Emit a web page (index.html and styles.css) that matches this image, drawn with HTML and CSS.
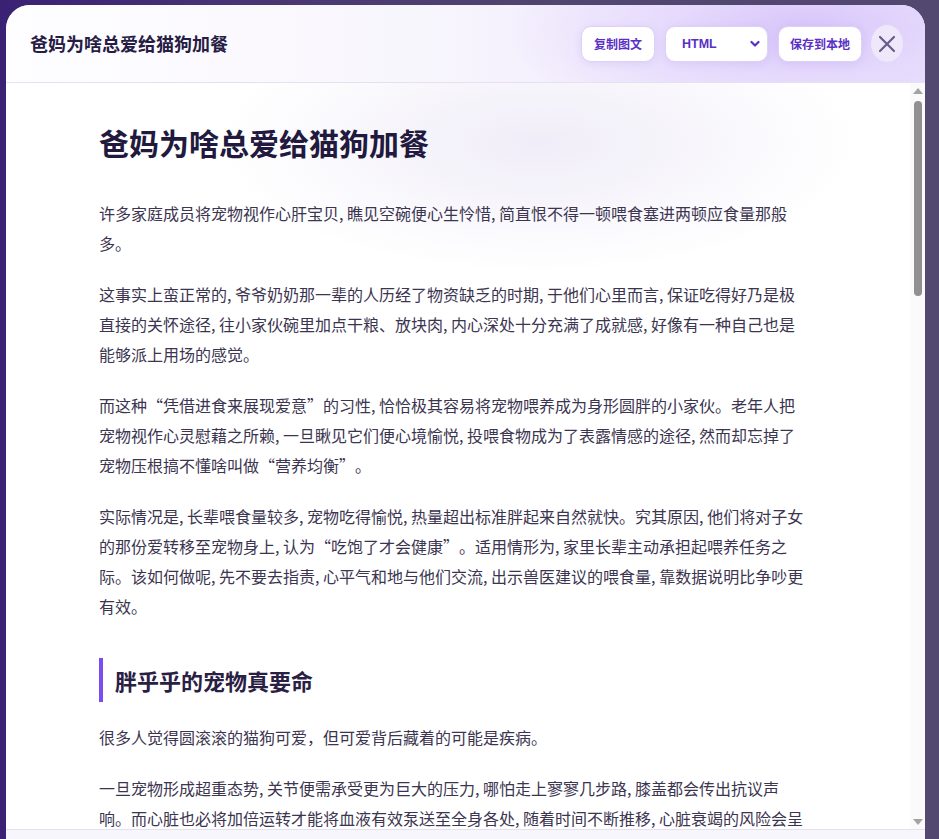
FILE: index.html
```html
<!DOCTYPE html>
<html lang="zh-CN">
<head>
<meta charset="utf-8">
<title>爸妈为啥总爱给猫狗加餐</title>
<link rel="stylesheet" href="styles.css">
</head>
<body>
<div class="modal">
  <header class="modal-header">
    <h2 class="modal-title">爸妈为啥总爱给猫狗加餐</h2>
    <div class="actions">
      <button class="btn">复制图文</button>
      <div class="select">
        <span>HTML</span>
        <svg class="chev" width="10" height="8" viewBox="0 0 10 8"><path d="M1.5 2 L5 5.5 L8.5 2" fill="none" stroke="#5b2fc9" stroke-width="2.2" stroke-linecap="round" stroke-linejoin="round"/></svg>
      </div>
      <button class="btn">保存到本地</button>
      <button class="close" aria-label="关闭">
        <svg width="20" height="20" viewBox="0 0 20 20"><path d="M3 3 L17 17 M17 3 L3 17" fill="none" stroke="#6a5b88" stroke-width="2.2" stroke-linecap="round"/></svg>
      </button>
    </div>
  </header>
  <main class="modal-body">
    <div class="scroll-area">
      <article class="article">
        <h1>爸妈为啥总爱给猫狗加餐</h1>
        <p>许多家庭成员将宠物视作心肝宝贝, 瞧见空碗便心生怜惜, 简直恨不得一顿喂食塞进两顿应食量那般多。</p>
        <p>这事实上蛮正常的, 爷爷奶奶那一辈的人历经了物资缺乏的时期, 于他们心里而言, 保证吃得好乃是极直接的关怀途径, 往小家伙碗里加点干粮、放块肉, 内心深处十分充满了成就感, 好像有一种自己也是能够派上用场的感觉。</p>
        <p>而这种“凭借进食来展现爱意”的习性, 恰恰极其容易将宠物喂养成为身形圆胖的小家伙。老年人把宠物视作心灵慰藉之所赖, 一旦瞅见它们便心境愉悦, 投喂食物成为了表露情感的途径, 然而却忘掉了宠物压根搞不懂啥叫做“营养均衡”。</p>
        <p>实际情况是, 长辈喂食量较多, 宠物吃得愉悦, 热量超出标准胖起来自然就快。究其原因, 他们将对子女的那份爱转移至宠物身上, 认为“吃饱了才会健康”。适用情形为, 家里长辈主动承担起喂养任务之际。该如何做呢, 先不要去指责, 心平气和地与他们交流, 出示兽医建议的喂食量, 靠数据说明比争吵更有效。</p>
        <h2>胖乎乎的宠物真要命</h2>
        <p>很多人觉得圆滚滚的猫狗可爱，但可爱背后藏着的可能是疾病。</p>
        <p>一旦宠物形成超重态势, 关节便需承受更为巨大的压力, 哪怕走上寥寥几步路, 膝盖都会传出抗议声响。而心脏也必将加倍运转才能将血液有效泵送至全身各处, 随着时间不断推移, 心脏衰竭的风险会呈现出逐步上升的态势。除此之外, 糖尿病、脂肪肝、呼吸困难等问题也会接踵而至, 让原本活泼的小家伙变得懒洋洋、不愿动弹。</p>
        <p>更让人揪心的是, 肥胖带来的伤害往往是悄无声息的。等到宠物出现明显的症状时, 身体里的器官可能早已不堪重负, 治疗起来既耗费金钱, 又让宠物饱受折磨。</p>
        <p>兽医常常提醒, 判断宠物是否超重, 可以轻轻摸一摸它的肋骨: 如果需要用力按压才能摸到, 或者从上往下看已经看不出腰身, 那就说明该控制饮食了。</p>
        <h2>零食才是隐形的热量炸弹</h2>
        <p>很多长辈觉得主粮吃得不多, 就随手丢几块零食当作奖励, 殊不知零食的热量往往远超想象。一小块肉干、几片饼干, 对人来说微不足道, 对一只体重只有几公斤的猫咪来说, 却可能相当于一整顿饭。</p>
        <p>此外, 人类的食物大多油盐偏重, 宠物长期食用不仅容易发胖, 还可能增加肾脏和胰腺的负担。像葡萄、洋葱、巧克力这类食物, 更是对猫狗有毒, 千万不能随意投喂。</p>
        <p>建议把零食的热量控制在每日总摄入的十分之一以内, 并且尽量选择专为宠物设计的健康零食, 用来训练或者奖励时再少量给予。</p>
        <h2>和长辈沟通的小技巧</h2>
        <p>与其一味地阻止, 不如换一种方式让长辈参与到科学喂养中来。可以准备一个带刻度的量杯, 每天按照固定的分量喂食, 让长辈负责“定时定量”这件事, 他们会觉得自己依然在照顾宠物, 也更容易接受。</p>
        <p>还可以定期带宠物去称体重, 把数字记录下来给长辈看。当他们亲眼看到宠物体重慢慢回到健康范围, 精神头越来越好, 自然会明白少吃一点并不是亏待它。</p>
        <p>另外, 不妨把投喂的乐趣转移到陪伴上, 比如让长辈带着狗狗散步、用逗猫棒陪猫咪玩耍。互动同样能表达爱意, 还能让宠物和老人一起动起来, 一举两得。</p>
        <h2>写在最后</h2>
        <p>爱宠物的方式有很多种, 喂饱它只是其中最简单的一种。真正的关爱, 是让它健健康康地陪伴我们更久。</p>
        <p>下次当家里的长辈又忍不住往碗里多添一勺时, 不妨温柔地提醒一句: 少吃一口, 它能多陪你一程。</p>
      </article>
    </div>
    <div class="scrollbar" aria-hidden="true">
      <span class="sb-arrow sb-up"></span>
      <span class="sb-thumb"></span>
      <span class="sb-track"></span>
      <span class="sb-arrow sb-down"></span>
    </div>
  </main>
  <footer class="modal-footer"></footer>
</div>
</body>
</html>
```

FILE: styles.css
```css
html, body {
  margin: 0;
  height: 100%;
  overflow: hidden;
}

body {
  background: linear-gradient(90deg, #3a2174 0%, #473474 25%, #51466f 60%, #524870 100%);
  font-family: "Noto Sans CJK SC", "Noto Sans", sans-serif;
  padding: 5px 14px 0 6px;
  box-sizing: border-box;
}

.modal {
  width: 919px;
  height: 900px;
  background: #ffffff;
  border-radius: 24px 24px 0 0;
  display: flex;
  flex-direction: column;
  overflow: hidden;
}

.modal-header {
  flex: 0 0 auto;
  height: 78px;
  box-sizing: border-box;
  padding: 0 22px 0 24px;
  display: flex;
  align-items: center;
  justify-content: space-between;
  border-bottom: 1px solid #e6e1f0;
  background:
    radial-gradient(ellipse 300px 110px at 87% 30%, rgba(214, 196, 250, 0.95) 0%, rgba(226, 212, 252, 0.7) 45%, rgba(240, 233, 253, 0) 100%),
    linear-gradient(90deg, #fefdff 0%, #f8f6fd 45%, #efe8fd 75%, #ebe3fc 100%);
}

.modal-title {
  margin: 0;
  font-size: 18px;
  font-weight: 700;
  color: #261c44;
  line-height: 1;
  padding-bottom: 1px;
}

.actions {
  display: flex;
  align-items: center;
  gap: 10px;
}

.btn, .select {
  height: 36px;
  box-sizing: border-box;
  background: #ffffff;
  border: 1px solid #ddd2f5;
  border-radius: 10px;
  font-family: "Noto Sans CJK SC", "Noto Sans", sans-serif;
  font-size: 12px;
  font-weight: 700;
  color: #5a2fc6;
  box-shadow: 0 2px 8px rgba(140, 100, 220, 0.14);
}

.btn {
  padding: 0 11px;
  cursor: pointer;
}

.actions .btn:first-child {
  padding: 0 12px;
}

.select {
  width: 103px;
  padding: 0 7px 0 16px;
  display: flex;
  align-items: center;
  justify-content: space-between;
  font-family: "Liberation Sans", Arial, sans-serif;
  font-size: 12.5px;
}

.chev {
  display: block;
}

.close {
  width: 32px;
  height: 37px;
  border: none;
  border-radius: 50%;
  background: #efe8fb;
  display: flex;
  align-items: center;
  justify-content: center;
  padding: 0;
  margin-left: -1px;
  cursor: pointer;
}

.modal-body {
  flex: 0 0 746px;
  display: flex;
  overflow: hidden;
  background:
    radial-gradient(ellipse 320px 130px at 58% 8%, rgba(236, 232, 246, 0.8) 0%, rgba(255, 255, 255, 0) 100%),
    #ffffff;
}

.scroll-area {
  flex: 1 1 auto;
  overflow: hidden;
}

.article {
  width: 720px;
  box-sizing: border-box;
  margin: 0 auto;
  padding: 40px 9px 60px 1px;
  color: #3b3550;
  font-size: 16px;
  line-height: 30px;
  text-spacing-trim: space-all;
}

.article h1 {
  margin: 0 0 36px 0;
  font-size: 30px;
  line-height: 39px;
  font-weight: 700;
  color: #221a3e;
}

.article p {
  margin: 0 0 21px 0;
}

.article h2 {
  margin: 37px 0 20px 0;
  padding: 6px 0 6px 12px;
  border-left: 4px solid #7b4cf0;
  font-size: 22px;
  line-height: 32px;
  font-weight: 700;
  color: #2a2043;
}

.scrollbar {
  flex: 0 0 15px;
  display: flex;
  flex-direction: column;
  align-items: center;
  background: #fafafb;
  padding: 5px 0 4px 0;
  box-sizing: border-box;
}

.sb-arrow {
  width: 0;
  height: 0;
  border-left: 5px solid transparent;
  border-right: 5px solid transparent;
}

.sb-up {
  border-bottom: 6px solid #a3a3a3;
}

.sb-down {
  border-top: 6px solid #a3a3a3;
}

.sb-thumb {
  width: 8px;
  height: 195px;
  margin-top: 7px;
  border-radius: 4px;
  background: #909090;
}

.sb-track {
  flex: 1 1 auto;
}

.modal-footer {
  flex: 1 1 auto;
  border-top: 1px solid #e4e0ee;
  background: #f8f6fd;
}
```
